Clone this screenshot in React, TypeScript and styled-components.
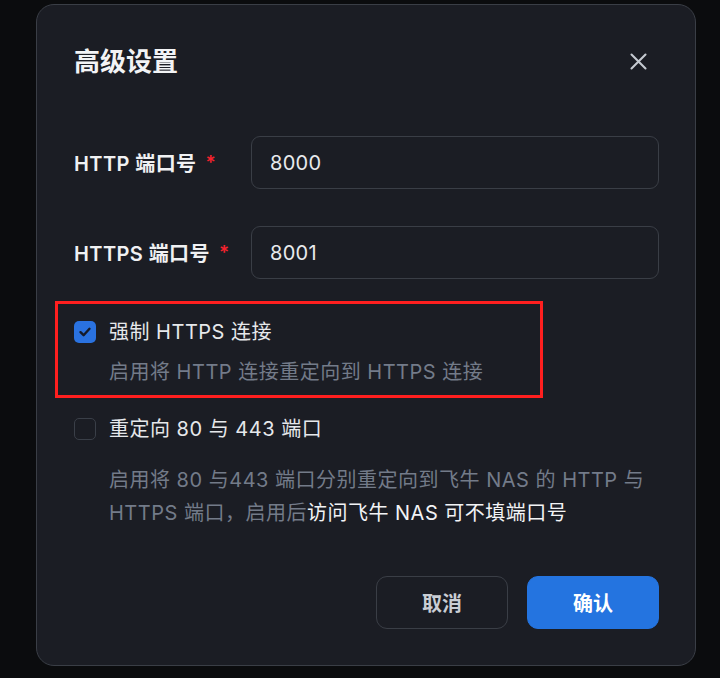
import * as React from "react"
import styled, { createGlobalStyle } from "styled-components"

const GlobalStyle = createGlobalStyle`
  html, body {
    margin: 0;
    padding: 0;
    background: #0b0c0e;
  }
  body {
    font-family: Inter, "Noto Sans CJK SC", sans-serif;
    -webkit-font-smoothing: antialiased;
  }
`

interface OptionProps {
  checked: boolean
  title: string
  gap: number
  children: React.ReactNode
}

const CheckOption = ({ checked, title, gap, children }: OptionProps) => (
  <OptionGrid>
    <CheckBox checked={checked}>
      {checked ? (
        <svg width="14" height="14" viewBox="0 0 14 14" fill="none">
          <polyline
            points="2.5,7.2 5.6,10.2 11.5,3.8"
            stroke="#151b2a"
            strokeWidth="2.4"
            strokeLinecap="round"
            strokeLinejoin="round"
          />
        </svg>
      ) : null}
    </CheckBox>
    <OptionTitle>{title}</OptionTitle>
    <OptionDesc gap={gap}>{children}</OptionDesc>
  </OptionGrid>
)

const App = () => (
  <React.Fragment>
    <GlobalStyle />
    <Page>
      <Dialog>
        <Header>
          <Title>高级设置</Title>
          <CloseButton aria-label="关闭">
            <svg width="17" height="17" viewBox="0 0 17 17" fill="none">
              <path
                d="M1.5 1.5 L15.5 15.5 M15.5 1.5 L1.5 15.5"
                stroke="#c5cad1"
                strokeWidth="2.1"
                strokeLinecap="round"
              />
            </svg>
          </CloseButton>
        </Header>

        <Form>
          <FieldRow>
            <Label>
              HTTP 端口号<Required>*</Required>
            </Label>
            <Input defaultValue="8000" />
          </FieldRow>
          <FieldRow>
            <Label>
              HTTPS 端口号<Required>*</Required>
            </Label>
            <Input defaultValue="8001" />
          </FieldRow>
        </Form>

        <Highlight>
          <CheckOption checked={true} title="强制 HTTPS 连接" gap={8}>
            启用将 HTTP 连接重定向到 HTTPS 连接
          </CheckOption>
        </Highlight>

        <PlainOption>
          <CheckOption checked={false} title="重定向 80 与 443 端口" gap={19}>
            启用将 80 与443 端口分别重定向到飞牛 NAS 的 HTTP 与 HTTPS 端口，启用后
            <Bright>访问飞牛 NAS 可不填端口号</Bright>
          </CheckOption>
        </PlainOption>

        <Footer>
          <Button variant="ghost">取消</Button>
          <Button variant="primary">确认</Button>
        </Footer>
      </Dialog>
    </Page>
  </React.Fragment>
)

const Page = styled.div`
  width: 720px;
  height: 678px;
  padding: 4px 0 0 36px;
  box-sizing: border-box;
  overflow: hidden;
`

const Dialog = styled.div`
  width: 660px;
  height: 662px;
  box-sizing: border-box;
  background: #1b1d24;
  border: 1px solid #3a3e46;
  border-radius: 18px;
  padding: 39px 36px 36px 37px;
  display: flex;
  flex-direction: column;
`

const Header = styled.div`
  display: flex;
  align-items: center;
  justify-content: space-between;
  height: 36px;
`

const Title = styled.h2`
  margin: 0;
  font-size: 26px;
  font-weight: 600;
  color: #f2f3f5;
  line-height: 36px;
`

const CloseButton = styled.button`
  background: none;
  border: none;
  padding: 0;
  margin-right: 12px;
  margin-top: -2px;
  width: 17px;
  height: 17px;
  display: flex;
  cursor: pointer;
`

const Form = styled.div`
  margin-top: 56px;
  display: flex;
  flex-direction: column;
  gap: 37px;
`

const FieldRow = styled.div`
  display: grid;
  grid-template-columns: 177px 1fr;
  align-items: center;
`

const Label = styled.label`
  font-size: 20px;
  font-weight: 600;
  letter-spacing: 0.4px;
  color: #f0f1f3;
  white-space: nowrap;
`

const Required = styled.span`
  color: #f5222d;
  margin-left: 9px;
  font-size: 19px;
  position: relative;
  top: -2px;
`

const Input = styled.input`
  height: 53px;
  box-sizing: border-box;
  background: #1b1d24;
  border: 1px solid #3a3e46;
  border-radius: 9px;
  padding: 0 18px;
  font-family: inherit;
  font-size: 20px;
  letter-spacing: 0.3px;
  color: #e8eaed;
  outline: none;
`

const Highlight = styled.div`
  margin: 22px 0 0 -19px;
  width: 488px;
  box-sizing: border-box;
  border: 3px solid #ff1f1f;
  padding: 12px 0 6px 16px;
`

const PlainOption = styled.div`
  margin-top: 15px;
`

const OptionGrid = styled.div`
  display: grid;
  grid-template-columns: 22px 1fr;
  column-gap: 13px;
  align-items: center;
`

const CheckBox = styled.span<{ checked: boolean }>`
  width: 22px;
  height: 22px;
  box-sizing: border-box;
  border-radius: 5px;
  background: ${p => (p.checked ? "#2a72e0" : "transparent")};
  border: ${p => (p.checked ? "none" : "1.5px solid #3a3f48")};
  display: flex;
  align-items: center;
  justify-content: center;
`

const OptionTitle = styled.div`
  font-size: 20px;
  line-height: 32px;
  letter-spacing: 0.5px;
  color: #e6e8eb;
`

const OptionDesc = styled.div<{ gap: number }>`
  grid-column: 2;
  margin-top: ${p => p.gap}px;
  font-size: 20px;
  line-height: 33px;
  letter-spacing: 0.5px;
  color: #737b89;
`

const Bright = styled.span`
  color: #f2f3f5;
`

const Footer = styled.div`
  margin-top: auto;
  display: flex;
  justify-content: flex-end;
  gap: 19px;
`

const Button = styled.button<{ variant: "ghost" | "primary" }>`
  width: 132px;
  height: 53px;
  border-radius: 11px;
  font-family: inherit;
  font-size: 20px;
  font-weight: 600;
  cursor: pointer;
  border: 1px solid ${p => (p.variant === "primary" ? "#2474e0" : "#3a3e46")};
  background: ${p => (p.variant === "primary" ? "#2474e0" : "transparent")};
  color: ${p => (p.variant === "primary" ? "#ffffff" : "#c9cdd4")};
`

export default App
